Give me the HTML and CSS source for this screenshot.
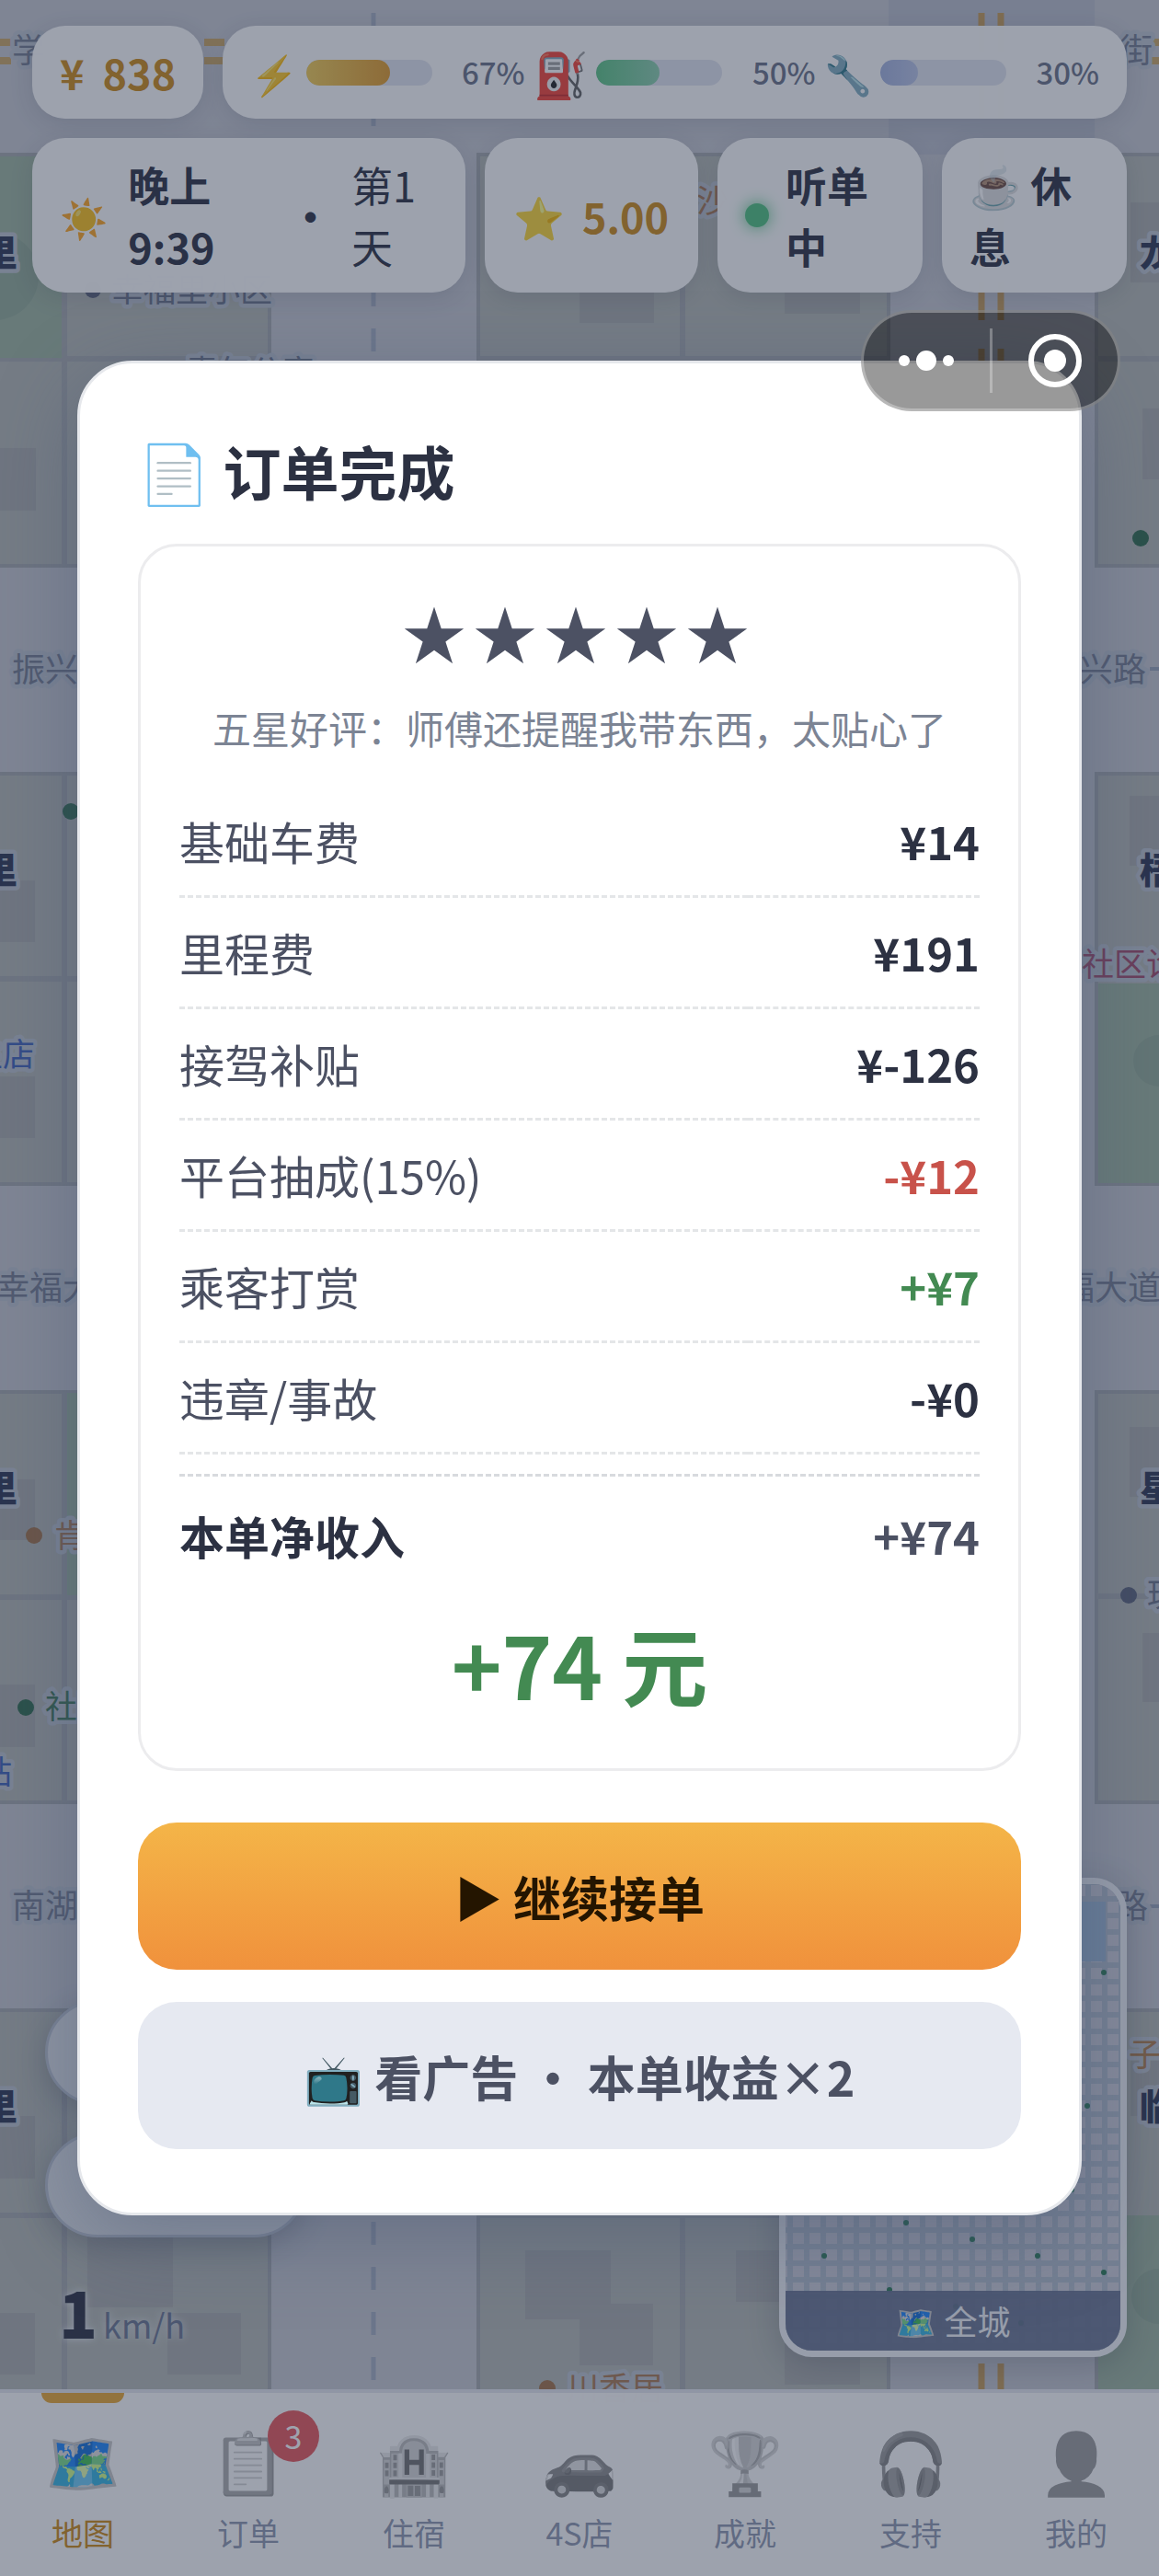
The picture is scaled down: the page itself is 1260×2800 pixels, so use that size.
FILE: index.html
```html
<!DOCTYPE html>
<html lang="zh-CN">
<head>
  <meta charset="UTF-8">
  <meta name="viewport" content="width=device-width, initial-scale=1.0">
  <title>订单完成</title>
  <link rel="stylesheet" href="styles.css">
</head>
<body>
  <div class="game">
    <!-- 城市地图 -->
    <svg class="map" viewBox="0 0 1260 2800" preserveAspectRatio="xMidYMin slice" aria-hidden="true">
      <defs>
        <pattern id="cells" width="18" height="18" patternUnits="userSpaceOnUse" x="862" y="2049">
          <rect width="12" height="12" fill="#cfcfda"/>
        </pattern>
      </defs>
      <rect width="1260" height="2800" fill="#c6c8d0"/>
      <rect x="966" width="224" height="168" fill="#babecb"/>

      <g fill="#b5b9b4" stroke="#a4a8ac" stroke-width="4">
        <rect x="-153" y="168" width="446" height="447"/>
        <rect x="520" y="168" width="446" height="447"/>
        <rect x="1192" y="168" width="446" height="447"/>
        <rect x="-153" y="841" width="446" height="446"/>
        <rect x="1192" y="841" width="446" height="446"/>
        <rect x="-153" y="1513" width="446" height="446"/>
        <rect x="1192" y="1513" width="446" height="446"/>
        <rect x="-153" y="2185" width="446" height="446"/>
        <rect x="520" y="2185" width="446" height="446"/>
        <rect x="1192" y="2185" width="446" height="446"/>
      </g>
      <g stroke="#a6a9ad" stroke-width="6">
        <path d="M70 168V615M70 841V1287M70 1513V1959M70 2185V2631M742 168V615M742 2185V2631"/>
        <path d="M0 390H293M520 390H966M1192 390H1260M0 1064H293M0 1736H293M1192 1735H1260M0 2408H293M520 2408H966"/>
      </g>
      <g fill="#9db49f">
        <rect y="170" width="67" height="219"/>
        <rect x="73" y="1514" width="218" height="220"/>
        <rect x="1194" y="1069" width="66" height="217"/>
        <rect x="1194" y="2408" width="66" height="222"/>
      </g>
      <g fill="#92ab97">
        <circle cx="-6" cy="300" r="48"/>
        <circle cx="1260" cy="1153" r="28"/>
        <circle cx="1260" cy="2496" r="30"/>
      </g>
      <g fill="#aaacab">
        <rect x="630" y="290" width="81" height="61"/>
        <rect x="853" y="290" width="82" height="51"/>
        <rect x="1229" y="220" width="40" height="87"/>
        <rect y="487" width="39" height="68"/>
        <rect x="1242" y="444" width="20" height="77"/>
        <rect x="1228" y="865" width="32" height="76"/>
        <rect y="957" width="38" height="67"/>
        <rect y="1170" width="38" height="67"/>
        <rect x="1228" y="1551" width="32" height="76"/>
        <rect y="1608" width="38" height="66"/>
        <rect x="1242" y="1775" width="20" height="75"/>
        <rect y="1831" width="38" height="68"/>
        <rect x="1229" y="2240" width="31" height="60"/>
        <rect y="2300" width="38" height="68"/>
        <rect x="95" y="2420" width="93" height="88"/>
        <rect x="182" y="2514" width="80" height="67"/>
        <rect y="2514" width="38" height="67"/>
        <rect x="571" y="2446" width="93" height="75"/>
        <rect x="630" y="2504" width="80" height="67"/>
        <rect x="800" y="2446" width="60" height="56"/>
        <rect x="853" y="2520" width="82" height="72"/>
      </g>
      <path d="M406 14V2600" stroke="#a4adbf" stroke-width="5" stroke-dasharray="25 24"/>
      <path d="M1067 14V2600M1088 14V2600" stroke="#c69c58" stroke-width="7" stroke-dasharray="42 31"/>
      <path d="M0 46H12M222 46H244M1248 46H1260M0 66H12M222 66H244M1248 66H1260" stroke="#cba664" stroke-width="8"/>
      <path d="M1250 727H1260M1250 2072H1260" stroke="#98a3b8" stroke-width="4"/>

      <g class="road-name">
        <text x="13" y="68">学</text>
        <text x="1217" y="68">街</text>
        <text x="13" y="741">振兴路</text>
        <text x="1174" y="741">兴路</text>
        <text x="-4" y="1413">幸福大道</text>
        <text x="1154" y="1413">福大道</text>
        <text x="13" y="2085">南湖路</text>
        <text x="1212" y="2085">路</text>
      </g>
      <g class="area-name">
        <text x="-20" y="289">里</text>
        <text x="1239" y="289">龙</text>
        <text x="-20" y="960">里</text>
        <text x="1239" y="960">梧</text>
        <text x="-20" y="1632">里</text>
        <text x="1239" y="1632">星</text>
        <text x="-20" y="2304">里</text>
        <text x="1239" y="2304">临</text>
      </g>
      <g class="poi-name">
        <circle cx="101" cy="315" r="9" fill="#596178"/><text x="121" y="328" fill="#6b7388">幸福里小区</text>
        <text x="202" y="417" fill="#6b7388">青年公寓</text>
        <text x="757" y="231" fill="#a87852">沙</text>
        <circle cx="1240" cy="585" r="9" fill="#2f6b4c"/>
        <circle cx="77" cy="882" r="9" fill="#2f6b4c"/>
        <text x="-32" y="1159" fill="#3f62b8">主店</text>
        <text x="1176" y="1061" fill="#a04a68">社区诊所</text>
        <circle cx="37" cy="1669" r="9" fill="#a27248"/><text x="59" y="1682" fill="#a87852">肯德基</text>
        <circle cx="1227" cy="1734" r="9" fill="#596178"/><text x="1247" y="1746" fill="#6b7388">玩</text>
        <circle cx="28" cy="1856" r="9" fill="#2f6b4c"/><text x="49" y="1868" fill="#3d7554">社区</text>
        <text x="-22" y="1939" fill="#3f62b8">站</text>
        <text x="1227" y="2246" fill="#b07d4a">子</text>
        <circle cx="595" cy="2596" r="9" fill="#a27248"/><text x="616" y="2609" fill="#a87852">川香居</text>
      </g>
    </svg>

    <!-- 顶部状态 -->
    <header class="hud">
      <div class="hud-row">
        <div class="chip money"><span>¥</span><span>838</span></div>
        <div class="chip stats">
          <div class="stat"><span class="stat-icon">⚡</span><div class="bar"><div class="energy" style="width: 67%"></div></div><span class="pct">67%</span></div>
          <div class="stat"><span class="stat-icon fuel-icon">⛽</span><div class="bar"><div class="fuel" style="width: 50%"></div></div><span class="pct">50%</span></div>
          <div class="stat"><span class="stat-icon">🔧</span><div class="bar"><div class="wear" style="width: 30%"></div></div><span class="pct">30%</span></div>
        </div>
      </div>
      <div class="hud-row">
        <div class="chip clock"><span class="icon">☀️</span><b>晚上<br>9:39</b><b class="sep">·</b><span>第1<br>天</span></div>
        <div class="chip rating"><span>⭐</span><span>5.00</span></div>
        <div class="chip status"><i class="dot"></i><b>听单<br>中</b></div>
        <button class="chip rest" type="button">☕ 休<br>息</button>
      </div>
    </header>

    <div class="pill pill-top"></div>
    <div class="pill pill-bottom"></div>
    <div class="speed"><b>1</b><span>km/h</span></div>

    <div class="minimap">
      <svg viewBox="854 2048 364 507" aria-hidden="true">
        <rect x="854" y="2048" width="364" height="507" fill="#b3bdcd"/>
        <rect x="854" y="2048" width="364" height="507" fill="url(#cells)"/>
        <rect x="1140" y="2067" width="62" height="65" fill="#9db9d6"/>
        <g fill="#2a7a55">
          <circle cx="1200" cy="2144" r="3"/><circle cx="1182" cy="2289" r="3"/><circle cx="1165" cy="2380" r="3"/>
          <circle cx="985" cy="2416" r="3"/><circle cx="1057" cy="2434" r="3"/><circle cx="896" cy="2452" r="3"/>
          <circle cx="1128" cy="2452" r="3"/><circle cx="1200" cy="2470" r="3"/><circle cx="967" cy="2489" r="3"/>
          <circle cx="1039" cy="2507" r="3"/><circle cx="1110" cy="2525" r="3"/>
        </g>
      </svg>
      <div class="minimap-label">🗺️ 全城</div>
    </div>

    <!-- 底部导航 -->
    <nav class="tabs">
      <a class="tab active" href="#map"><span class="tab-icon">🗺️</span>地图</a>
      <a class="tab" href="#orders"><span class="tab-icon">📋</span>订单<span class="badge">3</span></a>
      <a class="tab" href="#hotel"><span class="tab-icon">🏨</span>住宿</a>
      <a class="tab" href="#garage"><span class="tab-icon">🚗</span>4S店</a>
      <a class="tab" href="#awards"><span class="tab-icon">🏆</span>成就</a>
      <a class="tab" href="#support"><span class="tab-icon">🎧</span>支持</a>
      <a class="tab" href="#me"><span class="tab-icon">👤</span>我的</a>
    </nav>

    <!-- 订单完成弹窗 -->
    <div class="mask">
      <section class="modal" role="dialog" aria-labelledby="modalTitle">
        <h1 id="modalTitle"><span>📄</span>订单完成</h1>
        <div class="receipt">
          <div class="stars"><span>★</span><span>★</span><span>★</span><span>★</span><span>★</span></div>
          <p class="comment">五星好评：师傅还提醒我带东西，太贴心了</p>
          <table class="fees">
            <tbody>
              <tr><th scope="row">基础车费</th><td>¥14</td></tr>
              <tr><th scope="row">里程费</th><td>¥191</td></tr>
              <tr><th scope="row">接驾补贴</th><td>¥-126</td></tr>
              <tr><th scope="row">平台抽成(15%)</th><td class="minus">-¥12</td></tr>
              <tr><th scope="row">乘客打赏</th><td class="plus">+¥7</td></tr>
              <tr><th scope="row">违章/事故</th><td>-¥0</td></tr>
            </tbody>
          </table>
          <div class="net"><b>本单净收入</b><span>+¥74</span></div>
          <div class="total">+74 元</div>
        </div>
        <button class="btn primary" type="button">▶ 继续接单</button>
        <button class="btn ghost" type="button">📺 看广告 · 本单收益×2</button>
      </section>
    </div>

    <!-- 小程序胶囊 -->
    <div class="capsule">
      <button type="button" aria-label="更多">
        <svg width="60" height="24" viewBox="0 0 60 24" fill="#fff"><circle cx="6" cy="12" r="6"/><circle cx="30" cy="12" r="11"/><circle cx="54" cy="12" r="6"/></svg>
      </button>
      <span class="capsule-line"></span>
      <button type="button" aria-label="关闭">
        <svg width="60" height="60" viewBox="0 0 60 60"><circle cx="30" cy="30" r="26" fill="none" stroke="#fff" stroke-width="6"/><circle cx="30" cy="30" r="12" fill="#fff"/></svg>
      </button>
    </div>
  </div>
</body>
</html>
```
FILE: styles.css
```css
:root {
  --ink: #2c3142;
  --text: #4c5163;
  --muted: #7c8494;
  --gold: #cc8a18;
  --green: #438a52;
  --red: #c8524a;
}
* { box-sizing: border-box; }
body {
  margin: 0;
  font-family: "Noto Sans CJK SC", "Noto Color Emoji", sans-serif;
  font-size: 45px;
  color: var(--ink);
}
button { font-family: inherit; color: inherit; border: none; cursor: pointer; }
.game { position: relative; min-height: 100vh; overflow: hidden; display: flex; flex-direction: column; background: #c6c8d0; }
.map { position: absolute; inset: 0; width: 100%; height: 100%; }
.road-name { font-size: 36px; fill: #737b8f; }
.area-name { font-size: 39px; font-weight: 900; fill: #2c3552; }
.poi-name { font-size: 35px; }
.road-name text, .area-name text, .poi-name text { paint-order: stroke; stroke: #bcc3ce; stroke-width: 9px; stroke-linejoin: round; }

/* hud */
.hud { position: relative; display: flex; flex-direction: column; gap: 21px; padding: 28px 35px 0; }
.hud-row { display: flex; gap: 21px; }
.chip {
  display: flex;
  align-items: center;
  padding: 17px 30px;
  border-radius: 36px;
  background: rgba(255,255,255,0.98);
  box-shadow: 0 6px 24px rgba(40,50,75,0.15);
  font-size: 45px;
  line-height: 67px;
}
.money { gap: 20px; font-weight: 700; color: var(--gold); }
.stats { flex: 1; justify-content: space-between; }
.stat { display: flex; align-items: center; gap: 8px; }
.stat-icon { font-size: 42px; }
.fuel-icon { font-size: 48px; }
.bar { width: 137px; height: 28px; border-radius: 14px; background: #e1e4ee; overflow: hidden; }
.bar div { height: 100%; border-radius: 14px; }
.energy { background: linear-gradient(90deg, #f2cc54, #e09a2a); }
.fuel { background: linear-gradient(90deg, #5cc484, #8ccfae); }
.wear { background: linear-gradient(90deg, #a3b2de, #b9c4e6); }
.pct { width: 93px; text-align: right; font-size: 33px; font-weight: 500; color: #6b7288; }
.icon { font-size: 42px; }
.clock { flex: 411; gap: 22px; }
.clock .sep { margin-left: auto; }
.clock span:last-child { margin-right: 24px; }
.rating { flex: 172; justify-content: center; gap: 18px; font-weight: 700; color: var(--gold); white-space: nowrap; }
.status { flex: 163; gap: 18px; }
.dot { width: 26px; height: 26px; border-radius: 50%; background: #4fc27e; box-shadow: 0 0 18px #4fc27e; }
.rest { flex: 141; font-weight: 700; text-align: left; white-space: nowrap; }

/* left-bottom pills and speed */
.pill { position: absolute; left: 49px; width: 284px; height: 114px; border: 3px solid #bcc3d0; border-radius: 57px; background: #e0e3ea; box-shadow: 0 9px 30px rgba(30,40,60,0.25); }
.pill-top { top: 2174px; }
.pill-bottom { top: 2318px; }
.speed { position: absolute; left: 64px; top: 2462px; display: flex; align-items: baseline; gap: 6px; line-height: 100px; text-shadow: 0 0 9px #e4e8f2; }
.speed b { font-size: 69px; font-weight: 900; }
.speed span { font-size: 36px; color: #6b7590; }

.minimap { position: absolute; right: 35px; top: 2041px; width: 378px; height: 521px; border: 7px solid #f2f4f8; border-radius: 36px; overflow: hidden; box-shadow: 0 9px 36px rgba(30,40,60,0.25); }
.minimap svg { display: block; width: 100%; height: 100%; }
.minimap-label { position: absolute; left: 0; right: 0; bottom: 0; background: rgba(100,112,142,0.92); color: #f2f4f8; text-align: center; font-size: 36px; line-height: 65px; }

/* bottom tabs */
.tabs { position: relative; margin-top: auto; display: flex; height: 203px; border-top: 4px solid #e6e8ee; background: rgba(255,255,255,0.98); }
.tab { position: relative; flex: 1; display: flex; flex-direction: column; align-items: center; padding-top: 21px; font-size: 34px; line-height: 50px; color: #8f98b0; text-decoration: none; }
.tab-icon { margin-bottom: 6px; font-size: 66px; line-height: 100px; filter: grayscale(1); opacity: 0.65; }
.tab.active { color: var(--gold); }
.tab.active .tab-icon { filter: none; opacity: 1; }
.tab.active::before { content: ""; position: absolute; top: 0; width: 90px; height: 11px; border-radius: 0 0 11px 11px; background: #e9a834; }
.badge { position: absolute; top: 19px; right: 13px; width: 56px; height: 56px; border-radius: 50%; background: #e8585c; color: #fff; text-align: center; line-height: 56px; }

/* modal */
.mask { position: absolute; inset: 0; display: flex; align-items: center; padding: 0 84px; background: rgba(40,52,76,0.45); }
.modal {
  width: 100%;
  padding: 69px 63px;
  border: 3px solid #e6e8ec;
  border-radius: 60px;
  background: #fff;
  box-shadow: 0 24px 90px rgba(64,80,110,0.4);
}
.modal h1 { display: flex; align-items: center; gap: 14px; margin: 0 0 33px; font-size: 63px; font-weight: 700; line-height: 94px; }
.modal h1 span { font-weight: 400; }
.receipt { padding: 48px 42px 42px; border: 3px solid #ececee; border-radius: 42px; color: var(--text); }
.stars { display: flex; justify-content: center; gap: 8px; padding-right: 8px; font-size: 69px; line-height: 90px; }
.comment { margin: 27px 0 33px; text-align: center; font-size: 42px; line-height: 63px; color: var(--muted); }
.fees { width: 100%; border-collapse: collapse; font-size: 49px; line-height: 74px; }
.fees th { padding: 22px 0; text-align: left; font-weight: 400; }
.fees td { padding: 22px 0; text-align: right; font-weight: 700; color: var(--ink); }
.fees tr { border-bottom: 3px dashed #e4e6e8; }
.fees .minus { color: var(--red); }
.fees .plus { color: var(--green); }
.net { display: flex; justify-content: space-between; margin-top: 21px; padding-top: 27px; border-top: 3px dashed #d8dade; font-size: 49px; line-height: 74px; }
.net b { color: var(--ink); }
.net span { font-weight: 700; }
.total { padding-top: 30px; text-align: center; font-size: 93px; font-weight: 700; line-height: 144px; color: var(--green); }
.btn { display: block; width: 100%; height: 160px; border-radius: 42px; font-size: 52px; font-weight: 700; }
.primary { margin-top: 56px; background: linear-gradient(#f4b548, #f0913c); color: #241500; }
.ghost { margin-top: 35px; background: #e6e9f1; color: var(--text); }

.capsule { position: absolute; top: 337px; right: 42px; width: 282px; height: 110px; display: flex; align-items: center; border: 3px solid rgba(255,255,255,0.3); border-radius: 55px; background: rgba(0,0,0,0.4); }
.capsule button { flex: 1; display: flex; justify-content: center; padding: 0; background: none; }
.capsule-line { width: 3px; height: 70px; background: rgba(255,255,255,0.3); }
```
